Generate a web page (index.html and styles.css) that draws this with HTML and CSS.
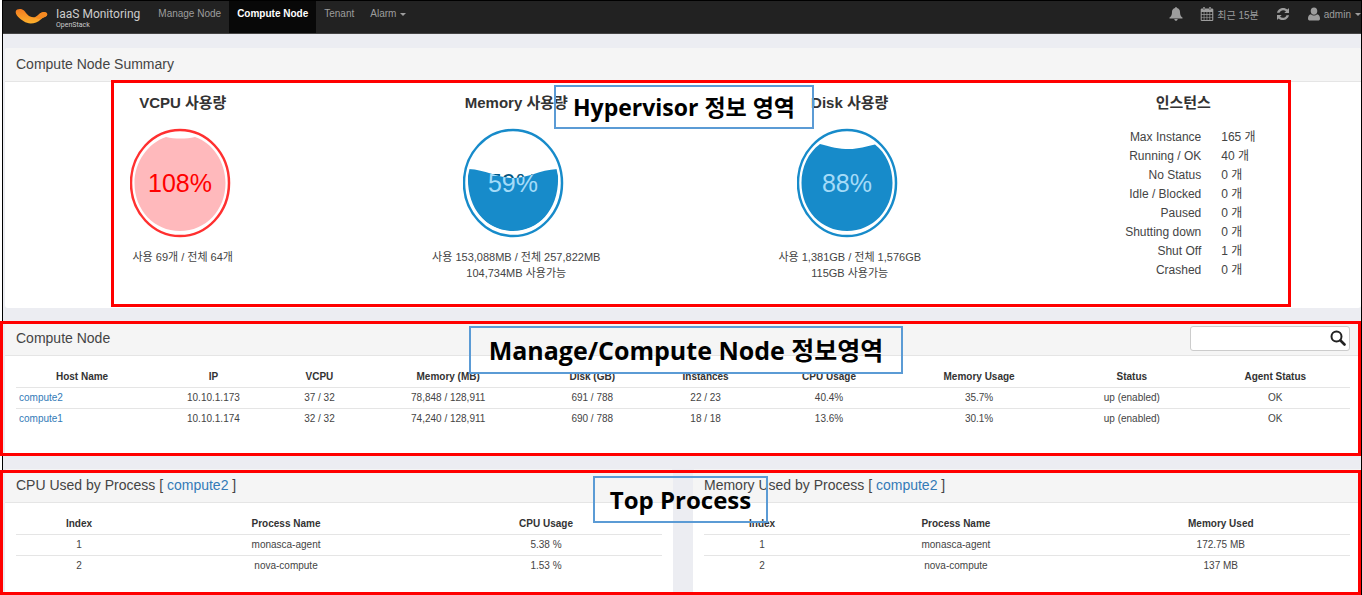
FILE: index.html
```html
<!DOCTYPE html>
<html lang="ko">
<head>
<meta charset="utf-8">
<title>IaaS Monitoring</title>
<link rel="stylesheet" href="styles.css">
</head>
<body>
<div class="app">
  <header class="navbar">
    <a class="brand" href="#">
      <svg class="brand-logo" viewBox="0 0 34 18" aria-hidden="true">
        <defs><linearGradient id="logo" x1="0" y1="0" x2="0" y2="1"><stop offset="0" stop-color="#f47b20"/><stop offset="1" stop-color="#fdb12c"/></linearGradient></defs>
        <path fill="url(#logo)" d="M.800 3C1.500 .500 7 0 9.500 2.500C12 5.500 14 9 19 9.200C23 9.200 24 6 27 4.500C30 3 33.500 4 33.200 6.500C33 9 29 9.500 26.500 11.500C22 16 14 17 9 13.500C5 10.500 0 7 .800 3Z"/>
        <path fill="#f58a22" d="M20 9.100C23.500 8.500 24 6 27 4.500C30 3 33.500 4 33.200 6.500C33 9 29 9.300 26.500 10.800C24 11.500 22 10.500 20 9.100Z"/>
      </svg>
      <span class="brand-text"><span class="brand-name">IaaS Monitoring</span><span class="brand-sub">OpenStack</span></span>
    </a>
    <nav class="menu">
      <a href="#">Manage Node</a>
      <a class="active" href="#">Compute Node</a>
      <a href="#">Tenant</a>
      <a href="#">Alarm <span class="caret"></span></a>
    </nav>
    <div class="tools">
      <a href="#" aria-label="Notifications"><svg class="icon" viewBox="0 0 14 14"><path d="M7 0c.6 0 .9.400.9.900 2.100.5 3.100 2 3.100 4 0 3.200.9 4.500 2.500 5.600v1H.5v-1C2.100 9.400 3 8.100 3 4.900c0-2 1-3.500 3.100-4C6.100.4 6.400 0 7 0zM5.300 12h3.400c-.1 1.200-.8 1.800-1.700 1.800S5.400 13.200 5.300 12z"/></svg></a>
      <a class="range" href="#"><svg class="icon" viewBox="0 0 14 14"><path fill-rule="evenodd" d="M1.500 1.500H3V.3h2v1.200h4V.3h2v1.200h1.500l.8.800v11l-.8.700h-11l-.8-.7v-11zM1.700 5v2h2V5zm2.700 0v2h2.200V5zm2.900 0v2h2.200V5zm2.900 0v2h2V5zM1.700 7.700v2.200h2V7.700zm2.700 0v2.200h2.200V7.700zm2.900 0v2.200h2.200V7.700zm2.900 0v2.200h2V7.700zM1.700 10.600V13h2v-2.400zm2.700 0V13h2.200v-2.400zm2.900 0V13h2.200v-2.400zm2.900 0V13h2v-2.400zM3.700 1v2h.6V1zm6 0v2h.6V1z"/></svg>최근 15분</a>
      <a href="#" aria-label="Refresh"><svg class="icon" viewBox="0 0 14 14"><path d="M13 1v5H8.300l1.700-1.700C7.800 2.300 4.500 3 3.500 5.800H1C1.900 1.200 8-.8 11.500 2.600zM1 13V8h4.700L4 9.700c2.200 2 5.500 1.300 6.500-1.500H13c-.9 4.600-7 6.600-10.500 3.200z"/></svg></a>
      <a class="user" href="#"><svg class="icon" viewBox="0 0 14 14"><path d="M7 .5c2.200 0 3.300 1.500 3.300 3.600S9.100 7.800 7 7.800 3.700 6.200 3.700 4.100 4.800.5 7 .5zM3.900 7.200c1.800 1.600 4.400 1.600 6.200 0 2 .3 2.900 2 2.900 4.200 0 1.300-.7 2.100-2 2.100H3c-1.300 0-2-.8-2-2.100 0-2.200.9-3.900 2.900-4.200z"/></svg>admin <span class="caret"></span></a>
    </div>
  </header>

  <main class="content">
    <section class="section">
      <div class="panel">
        <div class="panel-head"><h2>Compute Node Summary</h2></div>
        <div class="summary">
          <div class="metric">
            <h3>VCPU 사용량</h3>
            <svg class="gauge" viewBox="0 0 106 110" role="img" aria-label="108%">
              <ellipse cx="50" cy="55" rx="49" ry="53" fill="#fff" stroke="#ff3030" stroke-width="2.500"/>
              <path fill="#ffb9bc" d="M36 9C45 11 56 11 65 9C83 15 95.500 34 95.500 55C95.500 82 76 103 50 103S4.500 82 4.500 55C4.500 34 18 15 36 9Z"/>
              <text class="gauge-text" x="50" y="64" fill="#f00">108%</text>
            </svg>
            <p>사용 69개 / 전체 64개</p>
          </div>
          <div class="metric">
            <h3>Memory 사용량</h3>
            <svg class="gauge" viewBox="0 0 106 110" role="img" aria-label="59%">
              <defs><clipPath id="wave"><path d="M5.500 41C24 42 35 50 50 50S76 42 94.500 41C99 78 78 103 50 103S1 78 5.500 41Z"/></clipPath></defs>
              <ellipse cx="50" cy="55" rx="49" ry="53" fill="#fff" stroke="#178bca" stroke-width="2.500"/>
              <text class="gauge-text" x="50" y="64" fill="#045681">59%</text>
              <g clip-path="url(#wave)">
                <ellipse cx="50" cy="55" rx="45.500" ry="48.500" fill="#178bca"/>
                <text class="gauge-text" x="50" y="64" fill="#a4dbf8" aria-hidden="true">59%</text>
              </g>
            </svg>
            <p>사용 153,088MB / 전체 257,822MB<br>104,734MB 사용가능</p>
          </div>
          <div class="metric">
            <h3>Disk 사용량</h3>
            <svg class="gauge" viewBox="0 0 106 110" role="img" aria-label="88%">
              <ellipse cx="50" cy="55" rx="49" ry="53" fill="#fff" stroke="#178bca" stroke-width="2.500"/>
              <path fill="#178bca" d="M23 16C34 19 42 21 52 21S69 18.500 78 16.500C89 25 95.500 39 95.500 55C95.500 82 76 103 50 103S4.500 82 4.500 55C4.500 39 11 25 23 16Z"/>
              <text class="gauge-text" x="50" y="64" fill="#a4dbf8">88%</text>
            </svg>
            <p>사용 1,381GB / 전체 1,576GB<br>115GB 사용가능</p>
          </div>
          <div class="metric">
            <h3>인스턴스</h3>
            <dl class="instances">
              <dt>Max Instance</dt><dd>165 개</dd>
              <dt>Running / OK</dt><dd>40 개</dd>
              <dt>No Status</dt><dd>0 개</dd>
              <dt>Idle / Blocked</dt><dd>0 개</dd>
              <dt>Paused</dt><dd>0 개</dd>
              <dt>Shutting down</dt><dd>0 개</dd>
              <dt>Shut Off</dt><dd>1 개</dd>
              <dt>Crashed</dt><dd>0 개</dd>
            </dl>
          </div>
        </div>
      </div>
      <div class="region region-summary"><span class="tag tag-summary">Hypervisor 정보 영역</span></div>
    </section>

    <section class="section">
      <div class="panel">
        <div class="panel-head">
          <h2>Compute Node</h2>
          <div class="search">
            <input type="text" aria-label="Search compute node">
            <svg class="search-icon" viewBox="0 0 16 16" aria-hidden="true"><circle cx="6.500" cy="6.500" r="5" fill="none" stroke="#222" stroke-width="2"/><path d="M10.500 10.500L14.500 14.500" stroke="#222" stroke-width="2.600" stroke-linecap="round"/></svg>
          </div>
        </div>
        <div class="table-wrap nodes">
          <table>
            <colgroup><col class="n1"><col class="n2"><col class="n3"><col class="n4"><col class="n5"><col class="n6"><col class="n7"><col class="n8"><col class="n9"><col class="n10"></colgroup>
            <thead><tr><th>Host Name</th><th>IP</th><th>VCPU</th><th>Memory (MB)</th><th>Disk (GB)</th><th>Instances</th><th>CPU Usage</th><th>Memory Usage</th><th>Status</th><th>Agent Status</th></tr></thead>
            <tbody>
              <tr><td class="host"><a href="#">compute2</a></td><td>10.10.1.173</td><td>37 / 32</td><td>78,848 / 128,911</td><td>691 / 788</td><td>22 / 23</td><td>40.4%</td><td>35.7%</td><td>up (enabled)</td><td>OK</td></tr>
              <tr><td class="host"><a href="#">compute1</a></td><td>10.10.1.174</td><td>32 / 32</td><td>74,240 / 128,911</td><td>690 / 788</td><td>18 / 18</td><td>13.6%</td><td>30.1%</td><td>up (enabled)</td><td>OK</td></tr>
            </tbody>
          </table>
        </div>
      </div>
      <div class="region region-nodes"><span class="tag tag-nodes">Manage/Compute Node 정보영역</span></div>
    </section>

    <section class="section">
      <div class="pair">
        <div class="panel">
          <div class="panel-head"><h2>CPU Used by Process [ <a href="#">compute2</a> ]</h2></div>
          <div class="table-wrap">
            <table>
              <colgroup><col class="c1"><col class="c2"><col class="c3"></colgroup>
              <thead><tr><th>Index</th><th>Process Name</th><th>CPU Usage</th></tr></thead>
              <tbody>
                <tr><td>1</td><td>monasca-agent</td><td>5.38 %</td></tr>
                <tr><td>2</td><td>nova-compute</td><td>1.53 %</td></tr>
              </tbody>
            </table>
          </div>
        </div>
        <div class="panel">
          <div class="panel-head"><h2>Memory Used by Process [ <a href="#">compute2</a> ]</h2></div>
          <div class="table-wrap">
            <table>
              <colgroup><col class="m1"><col class="m2"><col class="m3"></colgroup>
              <thead><tr><th>Index</th><th>Process Name</th><th>Memory Used</th></tr></thead>
              <tbody>
                <tr><td>1</td><td>monasca-agent</td><td>172.75 MB</td></tr>
                <tr><td>2</td><td>nova-compute</td><td>137 MB</td></tr>
              </tbody>
            </table>
          </div>
        </div>
      </div>
      <div class="region region-process"><span class="tag tag-process">Top Process</span></div>
    </section>
  </main>
</div>
</body>
</html>
```
FILE: styles.css
```css
* { box-sizing: border-box; }
body {
  margin: 0;
  background: #fff;
  color: #444;
  font-family: "Liberation Sans", "Noto Sans CJK KR", sans-serif;
  font-size: 10px;
}
a { color: #337ab7; text-decoration: none; }
h2, h3, p, dl, dd { margin: 0; }

.app {
  margin-left: 2px;
  border: 1px solid #000;
  border-bottom: 0;
  background: #ecedf2;
}

/* top bar */
.navbar {
  display: flex;
  height: 33px;
  background: #222;
  border-bottom: 1px solid #444;
}
.navbar a { color: #9d9d9d; }
.brand {
  display: flex;
  gap: 8px;
  padding: 6px 10px 0 12px;
}
.brand-logo { width: 33px; height: 18px; margin-top: 1px; }
.brand-text { display: flex; flex-direction: column; font-family: Roboto, sans-serif; }
.brand-name { font-size: 12px; line-height: 14px; color: #ccc; }
.brand-sub { font-size: 7px; line-height: 8px; color: #ccc; }
.menu { display: flex; }
.menu a {
  padding: 0 8px;
  line-height: 26px;
}
.menu .active { background: #080808; color: #fff; font-weight: 700; }
.caret {
  display: inline-block;
  margin-left: 1px;
  border: 3px solid transparent;
  border-top-color: currentColor;
  border-bottom: 0;
  vertical-align: middle;
}
.tools { display: flex; gap: 17px; margin-left: auto; height: 26px; }
.tools a { display: flex; align-items: center; gap: 3px; }
.icon { width: 14px; height: 14px; fill: #9d9d9d; }

/* panels */
.content {
  display: flex;
  flex-direction: column;
  gap: 14px;
  padding: 14px 0 0 2px;
}
.section { position: relative; }
.panel { background: #fff; border-radius: 3px; }
.panel-head {
  display: flex;
  justify-content: space-between;
  height: 34px;
  padding: 4px 11px;
  border-bottom: 1px solid #e5e5e5;
  border-radius: 3px 3px 0 0;
  background: #f5f5f5;
}
.panel-head h2 { font-size: 14px; font-weight: 400; line-height: 24px; }
.pair { display: grid; grid-template-columns: 1fr 1fr; gap: 20px; }

/* summary */
.summary {
  display: grid;
  grid-template-columns: repeat(4, 1fr);
  padding: 10px 11px 27px;
}
.metric { display: flex; flex-direction: column; align-items: center; text-align: center; }
.metric h3 { font-size: 15px; line-height: 22px; color: #333; }
.metric p { margin-top: 11px; font-size: 11px; line-height: 16px; }
.gauge { width: 106px; height: 110px; margin-top: 14px; }
.gauge-text { font-size: 25px; text-anchor: middle; }
.instances {
  display: grid;
  grid-template-columns: 100px 80px;
  column-gap: 20px;
  margin-top: 14px;
  padding-left: 36px;
  font-size: 12px;
  line-height: 19px;
}
.instances dt { text-align: right; }
.instances dd { text-align: left; }

/* search */
.search { position: relative; width: 160px; height: 25px; }
.search input {
  width: 100%;
  height: 100%;
  border: 1px solid #ccc;
  border-radius: 3px;
  background: #fff;
}
.search-icon { position: absolute; top: 4px; right: 4px; width: 16px; height: 16px; }

/* tables */
.table-wrap { padding: 10px 11px 19px; }
.nodes { padding-bottom: 26px; }
table { width: 100%; border-collapse: collapse; table-layout: fixed; }
th, td { height: 21px; padding: 0; text-align: center; line-height: 20px; }
th { color: #333; vertical-align: bottom; }
td { border-top: 1px solid #e5e5e5; }
.host { padding-left: 3px; text-align: left; }
.n1 { width: 9.9%; } .n2 { width: 9.8%; } .n3 { width: 6.1%; } .n4 { width: 13.2%; }
.n5 { width: 8.4%; } .n6 { width: 8.6%; } .n7 { width: 9.9%; } .n8 { width: 12.6%; }
.n9 { width: 10.3%; } .n10 { width: 11.2%; }
.c1 { width: 19.5%; } .c2 { width: 44.6%; } .c3 { width: 35.9%; }
.m1 { width: 18%; } .m2 { width: 42%; } .m3 { width: 40%; }

/* annotations */
.region { position: absolute; border: 3px solid #f00; pointer-events: none; }
.region-summary { top: 32px; bottom: 1px; left: 106px; right: 70px; }
.region-nodes { top: -1px; bottom: -1px; left: -5px; right: 0; }
.region-process { top: 1px; bottom: 0; left: -5px; right: 0; }
.tag {
  position: absolute;
  top: 2px;
  border: 2px solid #5b9bd5;
  color: #000;
  font-family: "Open Sans", "Noto Sans CJK KR", sans-serif;
  font-size: 24px;
  font-weight: 700;
  line-height: 42px;
  text-align: center;
  white-space: nowrap;
}
.tag-summary { left: 440px; width: 260px; font-size: 23px; line-height: 40px; }
.tag-nodes { left: 466px; width: 434px; font-size: 25px; line-height: 44px; }
.tag-process { top: 3px; left: 590px; width: 175px; line-height: 43px; }
```
